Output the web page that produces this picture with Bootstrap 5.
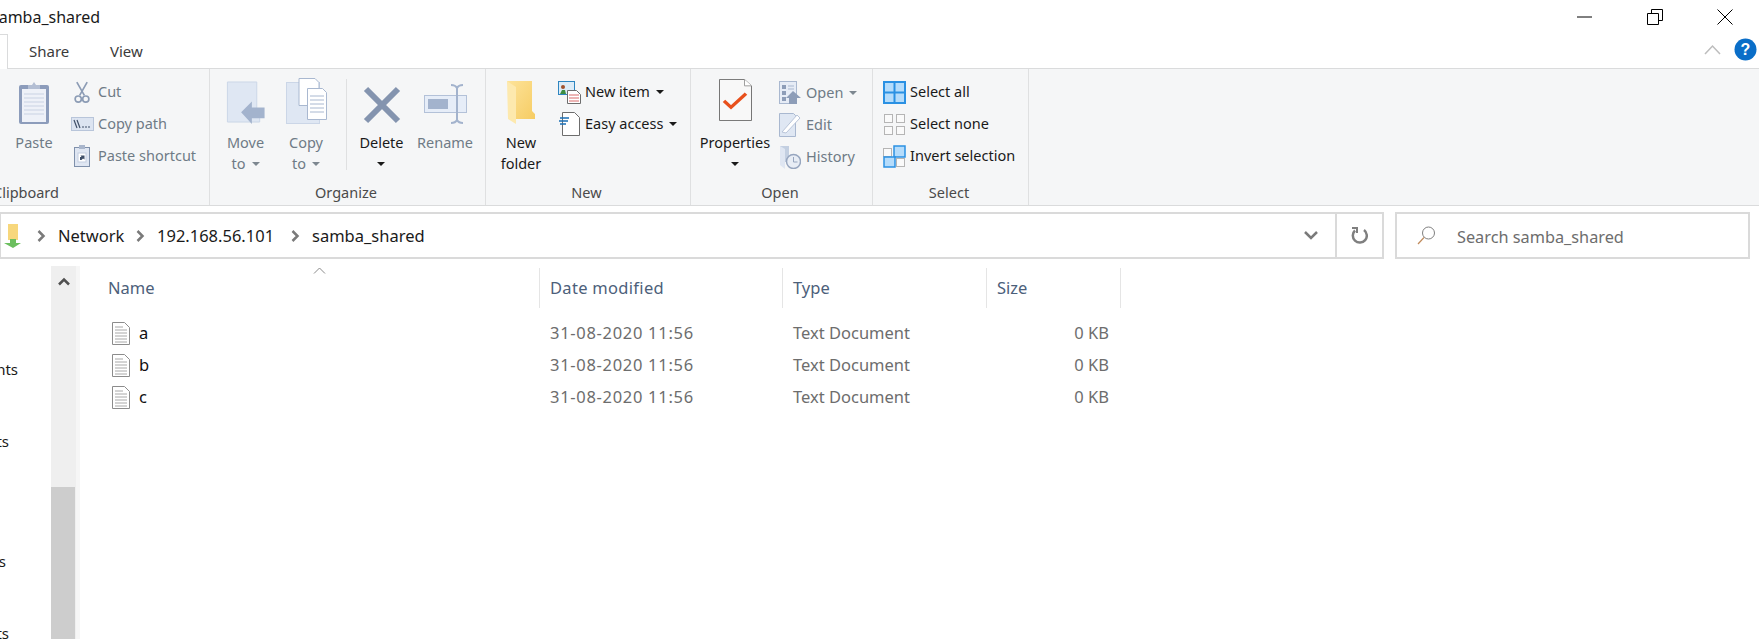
<!DOCTYPE html>
<html lang="en">
<head>
  <meta charset="UTF-8">
  <title>samba_shared</title>
  <link href="https://cdn.jsdelivr.net/npm/bootstrap@5.3.0/dist/css/bootstrap.min.css" rel="stylesheet">
  <style>
    html, body { height: 100%; overflow: hidden; }
    body {
      font-family: "Noto Sans", "Open Sans", sans-serif;
      font-size: 15px;
      color: #1a1a1a;
      background: #fff;
    }
    svg { display: block; flex: none; }
    .win-shell { width: 1759px; height: 639px; overflow: hidden; }

    /* title bar */
    .title-bar { height: 34px; }
    .title-clip { width: 110px; overflow: hidden; }
    .title-text { margin-left: -9px; white-space: nowrap; line-height: 36px; font-size: 16px; }
    .win-btns { padding-right: 26px; gap: 54px; }

    /* tabs */
    .tab-row { height: 35px; border-bottom: 1px solid #dadbdc; }
    .tab-home { width: 8px; height: 35px; background: #fff; border-top: 1px solid #dadbdc; border-right: 1px solid #dadbdc; }
    .tab-item { line-height: 35px; color: #3b3b3b; }
    .tab-share { margin-left: 21px; width: 81px; }
    .tab-tools { padding-right: 2px; gap: 13px; }

    /* ribbon */
    .ribbon { height: 137px; background: #f5f6f7; border-bottom: 1px solid #dadbdc; }
    .rib-group { height: 136px; padding-top: 7px; border-right: 1px solid #dfe0e1; }
    .rib-body { height: 106px; }
    .rib-label { line-height: 20px; text-align: center; padding-right: 3px; color: #4a4a4a; font-size: 14.5px; white-space: nowrap; }
    .g-clip { width: 210px; }
    .g-clip .rib-label { width: 59px; padding: 0; overflow: hidden; direction: rtl; text-align: right; }
    .g-org { width: 276px; }
    .g-new { width: 205px; }
    .g-open { width: 182px; }
    .g-sel { width: 156px; }
    .big-btn { display: flex; flex-direction: column; align-items: center; line-height: 21px; font-size: 14.5px; text-align: center; }
    .big-ico { height: 56px; display: flex; align-items: flex-end; padding-bottom: 8px; }
    .ico-props { padding-bottom: 11px; }
    .is-off { color: #6f7b86; }
    .small-list { display: flex; flex-direction: column; }
    .small-row { display: flex; align-items: center; height: 32px; white-space: nowrap; font-size: 14.5px; }
    .small-ico { width: 26px; display: flex; justify-content: center; }
    .small-txt { margin-left: 3px; }
    .caret-dn { display: inline-block; width: 0; height: 0; margin-left: 6px; vertical-align: 3px; border-left: 4.5px solid transparent; border-right: 4.5px solid transparent; border-top: 4.5px solid #1a1a1a; }
    .is-off .caret-dn { border-top-color: #7d8790; }
    .rib-sep { width: 1px; height: 91px; background: #dfe0e1; margin: 3px 0 0 13px; }
    .btn-paste { width: 52px; margin-left: 8px; }
    .list-clip { margin-left: 9px; }
    .btn-move { width: 67px; margin-left: 2px; }
    .btn-copy { width: 54px; }
    .btn-delete { width: 69px; }
    .btn-rename { width: 58px; }
    .btn-folder { width: 70px; }
    .btn-props { width: 86px; margin-left: 1px; }
    .list-open { padding-top: 1px; margin-left: -1px; }

    /* address row */
    .addr-row { height: 60px; padding-top: 6px; }
    .addr-box { width: 1384px; height: 47px; border: 2px solid #dadada; border-left-width: 1px; }
    .addr-part { white-space: nowrap; font-size: 16.5px; margin-left: 12px; padding-top: 2px; }
    .part-net { width: 78px; }
    .part-ip { width: 134px; }
    .addr-home { margin-left: 3px; }
    .addr-first { margin-left: 15px; }
    .addr-drop { width: 49px; }
    .addr-refresh { width: 47px; border-left: 2px solid #dadada; height: 100%; }
    .search-box { width: 355px; height: 47px; margin-left: 11px; border: 2px solid #dadada; padding-left: 20px; color: #6d6d6d; font-size: 16.3px; }
    .search-txt { margin-left: 21px; padding-top: 3px; }

    /* body */
    .main-row { height: 373px; }
    .nav-pane { width: 51px; overflow: hidden; }
    .nav-top { height: 67px; }
    .nav-line { height: 72px; display: flex; justify-content: flex-end; align-items: center; white-space: nowrap; padding-right: 42px; }
    .nav-near { padding-right: 33px; }
    .nav-far { padding-right: 45px; }
    .nav-blank { height: 48px; }
    .scroll-track { width: 25px; background: #efefef; }
    .scroll-up { height: 30px; }
    .scroll-thumb { margin-top: 191px; height: 154px; width: 24px; background: #cdcdcd; }
    .pane-gap { width: 4px; background: #f6f6f6; }
    .list-pane { position: relative; }
    .sort-mark { position: absolute; left: 233px; top: 1px; }
    .head-row { height: 51px; padding-top: 2px; }
    .col-name { width: 460px; }
    .col-date { width: 243px; }
    .col-kind { width: 204px; }
    .col-size { width: 134px; }
    .head-cell { height: 40px; display: flex; align-items: center; padding-left: 10px; border-right: 1px solid #e5e5e5; color: #4c607a; font-size: 16.5px; }
    .head-cell.col-name { padding-left: 28px; }
    .head-cell.col-date { letter-spacing: .3px; }
    .file-row { display: flex; height: 32px; align-items: center; color: #6d6d6d; font-size: 16.5px; }
    .file-name { display: flex; align-items: center; padding-left: 32px; color: #111; gap: 9px; }
    .file-date { padding-left: 10px; letter-spacing: .7px; }
    .file-kind { padding-left: 10px; }
    .file-size { text-align: right; padding-right: 12px; }
  </style>
</head>
<body>
<div class="win-shell d-flex flex-column">

  <!-- title -->
  <div class="title-bar d-flex justify-content-between align-items-center">
    <div class="title-clip"><div class="title-text">samba_shared</div></div>
    <div class="win-btns d-flex align-items-center">
      <svg width="16" height="16" viewBox="0 0 16 16"><path d="M0 8h15" stroke="#000" stroke-width="1"/></svg>
      <svg width="16" height="16" viewBox="0 0 16 16" fill="none" stroke="#000"><path d="M.5 4.500h11v11H.5zM4.500 4V.5h11v11H12"/></svg>
      <svg width="16" height="16" viewBox="0 0 16 16" fill="none" stroke="#000"><path d="M.5.500l15 15M15.500.5l-15 15"/></svg>
    </div>
  </div>

  <!-- tabs -->
  <div class="tab-row d-flex align-items-start justify-content-between">
    <div class="d-flex">
      <div class="tab-home"></div>
      <div class="tab-item tab-share">Share</div>
      <div class="tab-item">View</div>
    </div>
    <div class="tab-tools d-flex align-items-center pt-1">
      <svg width="17" height="11" viewBox="0 0 17 11" fill="none" stroke="#bdbdbd" stroke-width="1.500"><path d="M1 10l7.500-8 7.500 8"/></svg>
      <svg width="23" height="23" viewBox="0 0 23 23"><circle cx="11.500" cy="11.500" r="11" fill="#0a6ec8"/><text x="11.500" y="17" text-anchor="middle" font-family="Liberation Sans" font-weight="700" font-size="16" fill="#fff">?</text></svg>
    </div>
  </div>

  <!-- ribbon -->
  <div class="ribbon d-flex">
    <div class="rib-group g-clip d-flex flex-column">
      <div class="rib-body d-flex">
        <div class="big-btn is-off btn-paste">
          <div class="big-ico">
            <svg width="32" height="43" viewBox="0 0 32 43"><rect x="1" y="4" width="30" height="39" rx="2" fill="#8c9cbb"/><rect x="4" y="8" width="24" height="33" fill="#eef1f8"/><path d="M6 13h20M6 17h20M6 21h20M6 25h20M6 29h20M6 33h20" stroke="#c9d2e3"/><path d="M10 8V4h4l2-3 2 3h4v4z" fill="#b3bed3"/></svg>
          </div>
          <span>Paste</span>
        </div>
        <div class="small-list is-off list-clip">
          <div class="small-row"><span class="small-ico"><svg width="16" height="23" viewBox="0 0 17 24" fill="none" stroke="#8c9cb5" stroke-width="1.800"><path d="M3 1l8 14M14 1L6 15"/><circle cx="4.500" cy="19" r="3.300"/><circle cx="12.500" cy="19" r="3.300"/></svg></span><span class="small-txt">Cut</span></div>
          <div class="small-row"><span class="small-ico"><svg width="23" height="14" viewBox="0 0 23 14"><rect x=".5" y=".5" width="22" height="13" fill="#dce4f1" stroke="#b8c5da"/><path d="M3 3l3 8M6 3l3 8" stroke="#3f4f68" stroke-width="1.200"/><path d="M11 10h2M14 10h2M17 10h2" stroke="#3f4f68"/></svg></span><span class="small-txt">Copy path</span></div>
          <div class="small-row"><span class="small-ico"><svg width="16" height="22" viewBox="0 0 16 22"><rect x=".5" y="2.500" width="15" height="19" fill="#dfe6f2" stroke="#7f90ab"/><rect x="5" y="0" width="6" height="4" fill="#a9b6cc"/><rect x="4" y="8" width="8" height="9" fill="#fff" stroke="#c3cde0"/><path d="M6 15v-3h1.500l-1-1.500h4v4L9 13.500 7.500 15z" fill="#3f4f68"/></svg></span><span class="small-txt">Paste shortcut</span></div>
        </div>
      </div>
      <div class="rib-label">Clipboard</div>
    </div>

    <div class="rib-group g-org d-flex flex-column">
      <div class="rib-body d-flex">
        <div class="big-btn is-off btn-move">
          <div class="big-ico">
            <svg width="40" height="43" viewBox="0 0 40 44"><path d="M1 1h30v31h3v10H1z" fill="#dfe7f3" stroke="#cbd6e7"/><path d="M15 32L26 21v6h13v11H26v6z" fill="#a3b3cd"/></svg>
          </div>
          <span>Move<br>to<i class="caret-dn"></i></span>
        </div>
        <div class="big-btn is-off btn-copy">
          <div class="big-ico">
            <svg width="41" height="46" viewBox="0 0 41 46"><rect x=".5" y="4.500" width="33" height="41" fill="#dfe7f3" stroke="#cbd6e7"/><path d="M13 .5h16l4 4v23H13z" fill="#fff" stroke="#a9b8d0"/><path d="M21.500 10.500h15l4 4v27h-19z" fill="#fff" stroke="#a9b8d0"/><path d="M24 18h14M24 22h14M24 26h14M24 30h14M24 34h14" stroke="#a9b8d0"/></svg>
          </div>
          <span>Copy<br>to<i class="caret-dn"></i></span>
        </div>
        <div class="rib-sep"></div>
        <div class="big-btn btn-delete">
          <div class="big-ico">
            <svg width="38" height="38" viewBox="0 0 38 38"><path d="M3 3l32 32M35 3L3 35" stroke="#8494af" stroke-width="6"/></svg>
          </div>
          <span>Delete<br><i class="caret-dn m-0"></i></span>
        </div>
        <div class="big-btn is-off btn-rename">
          <div class="big-ico">
            <svg width="43" height="40" viewBox="0 0 43 40"><rect x=".5" y="11.500" width="42" height="17" fill="#e6edf8" stroke="#b3c1d8"/><rect x="4" y="15" width="20" height="10" fill="#a3b3cd"/><path d="M27 1c3 0 5 1 6 3 1-2 3-3 6-3M33 4v32M27 39c3 0 5-1 6-3 1 2 3 3 6 3" fill="none" stroke="#a3b3cd" stroke-width="2"/></svg>
          </div>
          <span>Rename</span>
        </div>
      </div>
      <div class="rib-label">Organize</div>
    </div>

    <div class="rib-group g-new d-flex flex-column">
      <div class="rib-body d-flex">
        <div class="big-btn btn-folder">
          <div class="big-ico">
            <svg width="30" height="43" viewBox="0 0 30 43"><defs><linearGradient id="fldr" x1="0" y1="0" x2="1" y2="1"><stop offset="0" stop-color="#fde39a"/><stop offset="1" stop-color="#f6cc63"/></linearGradient></defs><path d="M1 0h25v30l3 3v5H10z" fill="url(#fldr)"/><path d="M1 0l9 6v37L2 38z" fill="#fde9ae"/></svg>
          </div>
          <span>New<br>folder</span>
        </div>
        <div class="small-list">
          <div class="small-row"><span class="small-ico"><svg width="23" height="23" viewBox="0 0 23 23"><rect x=".5" y=".5" width="16" height="13" fill="#dcecf8" stroke="#2e86c1"/><circle cx="5" cy="6" r="2" fill="#a0522d"/><path d="M2 13l2-4h3l1 4z" fill="#3e8e41"/><path d="M9.500 9.500h9l4 4v9h-13z" fill="#fff" stroke="#6d6d6d"/><path d="M11 14h10M11 17h10M11 20h10" stroke="#d96a6a"/></svg></span><span class="small-txt">New item<i class="caret-dn"></i></span></div>
          <div class="small-row"><span class="small-ico"><svg width="21" height="24" viewBox="0 0 21 24"><path d="M3.500 .5h12l5 5v18h-17z" fill="#fff" stroke="#6d6d6d"/><path d="M1 6h9M0 9h9M1 12h6" stroke="#1a6fb5" stroke-width="1.300"/></svg></span><span class="small-txt">Easy access<i class="caret-dn"></i></span></div>
        </div>
      </div>
      <div class="rib-label">New</div>
    </div>

    <div class="rib-group g-open d-flex flex-column">
      <div class="rib-body d-flex">
        <div class="big-btn btn-props">
          <div class="big-ico ico-props">
            <svg width="33" height="42" viewBox="0 0 33 46" preserveAspectRatio="none"><path d="M.5.500h25l7 7v38H.5z" fill="#f8f8f8" stroke="#6f6f6f"/><path d="M25.500.5v7h7" fill="#fff" stroke="#9a9a9a"/><path d="M5 24l7 7 15-15" fill="none" stroke="#e8501c" stroke-width="3.500"/></svg>
          </div>
          <span>Properties<br><i class="caret-dn m-0"></i></span>
        </div>
        <div class="small-list is-off list-open">
          <div class="small-row"><span class="small-ico"><svg width="22" height="24" viewBox="0 0 22 24"><rect x=".5" y=".5" width="17" height="22" fill="#e6ecf6" stroke="#a9b8d0"/><path d="M3 4h4v4H3zM3 10h4v4H3zM3 16h4v4H3z" fill="#8d9db8"/><path d="M9 5h6M9 8h6" stroke="#a9b8d0"/><path d="M10 23v-6H7l7-7 8 7h-4v6z" fill="#8d9db8"/></svg></span><span class="small-txt">Open<i class="caret-dn"></i></span></div>
          <div class="small-row"><span class="small-ico"><svg width="22" height="24" viewBox="0 0 22 24"><path d="M.5 .5h14l2 2v21H.5z" fill="#dfe7f3" stroke="#a9b8d0"/><path d="M3 19L18 2l3 3-14 15z" fill="#fff" stroke="#b9c5d9"/></svg></span><span class="small-txt">Edit</span></div>
          <div class="small-row"><span class="small-ico"><svg width="22" height="24" viewBox="0 0 22 24"><path d="M1 1h9v16H1z" fill="#c3cfe1"/><path d="M1 1l5 3v20l-5-4z" fill="#dfe6f2"/><circle cx="14.500" cy="16.500" r="7" fill="#e8edf5" stroke="#97a6bf" stroke-width="1.500"/><path d="M14.500 12v5h4" fill="none" stroke="#97a6bf"/></svg></span><span class="small-txt">History</span></div>
        </div>
      </div>
      <div class="rib-label">Open</div>
    </div>

    <div class="rib-group g-sel d-flex flex-column">
      <div class="rib-body d-flex ps-2">
        <div class="small-list">
          <div class="small-row"><span class="small-ico"><svg width="23" height="23" viewBox="0 0 23 23"><rect x="1" y="1" width="21" height="21" fill="#b5dcfb" stroke="#2b91e3" stroke-width="2"/><path d="M11.500 1v21M1 11.500h21" stroke="#2b91e3" stroke-width="2"/></svg></span><span class="small-txt">Select all</span></div>
          <div class="small-row"><span class="small-ico"><svg width="21" height="21" viewBox="0 0 21 21" fill="#fafafa" stroke="#b5b5b5"><rect x=".5" y=".5" width="8" height="8"/><rect x="12.500" y=".5" width="8" height="8"/><rect x=".5" y="12.500" width="8" height="8"/><rect x="12.500" y="12.500" width="8" height="8"/></svg></span><span class="small-txt">Select none</span></div>
          <div class="small-row"><span class="small-ico"><svg width="23" height="23" viewBox="0 0 23 23"><rect x=".5" y="3.500" width="8" height="8" fill="#fafafa" stroke="#b5b5b5"/><rect x="11" y="1" width="11" height="11" fill="#b5dcfb" stroke="#2b91e3" stroke-width="1.500"/><rect x="1" y="12" width="11" height="10" fill="#b5dcfb" stroke="#2b91e3" stroke-width="1.500"/><rect x="13.500" y="13.500" width="8" height="8" fill="#fafafa" stroke="#b5b5b5"/></svg></span><span class="small-txt">Invert selection</span></div>
        </div>
      </div>
      <div class="rib-label">Select</div>
    </div>
  </div>

  <!-- address -->
  <div class="addr-row d-flex">
    <div class="addr-box d-flex align-items-center">
      <svg class="addr-home" width="18" height="24" viewBox="0 0 18 24"><path d="M4 0h10v16H4z" fill="#f7d77c"/><path d="M6 15h6v4h5l-8 5-9-5h6z" fill="#6cbf5f"/></svg>
      <svg class="addr-first" width="9" height="12" viewBox="0 0 9 12" fill="none" stroke="#7a7a7a" stroke-width="2.500"><path d="M1.500 1l5 5-5 5"/></svg>
      <span class="addr-part part-net">Network</span>
      <svg width="9" height="12" viewBox="0 0 9 12" fill="none" stroke="#7a7a7a" stroke-width="2.500"><path d="M1.500 1l5 5-5 5"/></svg>
      <span class="addr-part part-ip">192.168.56.101</span>
      <svg width="9" height="12" viewBox="0 0 9 12" fill="none" stroke="#7a7a7a" stroke-width="2.500"><path d="M1.500 1l5 5-5 5"/></svg>
      <span class="addr-part">samba_shared</span>
      <div class="addr-drop ms-auto d-flex justify-content-center">
        <svg width="14" height="9" viewBox="0 0 14 9" fill="none" stroke="#7a7a7a" stroke-width="2.500"><path d="M1 1l6 6 6-6"/></svg>
      </div>
      <div class="addr-refresh d-flex align-items-center justify-content-center">
        <svg width="17" height="17" viewBox="0 0 17 17" fill="none" stroke="#7f7f7f" stroke-width="2.500"><path d="M4 3.500A7 7 0 1 0 13 3"/><path d="M1 1h5v5" stroke-width="2"/></svg>
      </div>
    </div>
    <div class="search-box d-flex align-items-center">
      <svg width="19" height="19" viewBox="0 0 19 19" fill="none"><circle cx="11.500" cy="7" r="6" stroke="#7f7f7f"/><path d="M7 11.500L1 18" stroke="#c08a5a" stroke-width="1.200"/></svg>
      <span class="search-txt">Search samba_shared</span>
    </div>
  </div>

  <!-- main -->
  <div class="main-row d-flex">
    <div class="nav-pane">
      <div class="nav-top"></div>
      <div class="nav-line nav-near">nts</div>
      <div class="nav-line">ts</div>
      <div class="nav-line nav-blank"></div>
      <div class="nav-line nav-far">s</div>
      <div class="nav-line">ts</div>
    </div>
    <div class="scroll-track">
      <div class="scroll-up d-flex align-items-center justify-content-center">
        <svg width="12" height="9" viewBox="0 0 12 9" fill="none" stroke="#505050" stroke-width="2.500"><path d="M1 7.500l5-5 5 5"/></svg>
      </div>
      <div class="scroll-thumb"></div>
    </div>
    <div class="pane-gap"></div>
    <div class="list-pane flex-grow-1">
      <svg class="sort-mark" width="13" height="7" viewBox="0 0 13 7" fill="none" stroke="#8a8a8a"><path d="M1 6.500l5.500-5.500 5.500 5.500"/></svg>
      <div class="head-row d-flex">
        <div class="head-cell col-name">Name</div>
        <div class="head-cell col-date">Date modified</div>
        <div class="head-cell col-kind">Type</div>
        <div class="head-cell col-size">Size</div>
      </div>
      <div class="file-row">
        <div class="file-name col-name"><svg width="18" height="23" viewBox="0 0 18 23"><path d="M.5.500h12l5 5v17H.5z" fill="#fff" stroke="#8c8c8c"/><path d="M3 5h8M3 8h12M3 11h12M3 14h12M3 17h12M3 20h12" stroke="#a8a8a8"/></svg>a</div>
        <div class="file-date col-date">31-08-2020 11:56</div>
        <div class="file-kind col-kind">Text Document</div>
        <div class="file-size col-size">0 KB</div>
      </div>
      <div class="file-row">
        <div class="file-name col-name"><svg width="18" height="23" viewBox="0 0 18 23"><path d="M.5.500h12l5 5v17H.5z" fill="#fff" stroke="#8c8c8c"/><path d="M3 5h8M3 8h12M3 11h12M3 14h12M3 17h12M3 20h12" stroke="#a8a8a8"/></svg>b</div>
        <div class="file-date col-date">31-08-2020 11:56</div>
        <div class="file-kind col-kind">Text Document</div>
        <div class="file-size col-size">0 KB</div>
      </div>
      <div class="file-row">
        <div class="file-name col-name"><svg width="18" height="23" viewBox="0 0 18 23"><path d="M.5.500h12l5 5v17H.5z" fill="#fff" stroke="#8c8c8c"/><path d="M3 5h8M3 8h12M3 11h12M3 14h12M3 17h12M3 20h12" stroke="#a8a8a8"/></svg>c</div>
        <div class="file-date col-date">31-08-2020 11:56</div>
        <div class="file-kind col-kind">Text Document</div>
        <div class="file-size col-size">0 KB</div>
      </div>
    </div>
  </div>
</div>
<script src="https://cdn.jsdelivr.net/npm/bootstrap@5.3.0/dist/js/bootstrap.bundle.min.js"></script>
</body>
</html>
